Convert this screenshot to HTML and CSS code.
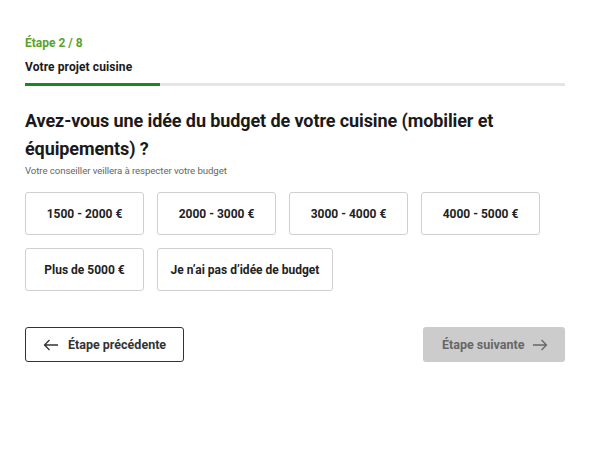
FILE: index.html
```html
<!DOCTYPE html>
<html lang="fr">
<head>
<meta charset="utf-8">
<link rel="stylesheet" href="styles.css">
</head>
<body>
<main class="page">
  <header class="step">
    <div class="step-count">Étape 2 / 8</div>
    <div class="step-title">Votre projet cuisine</div>
    <div class="progress"><div class="progress-fill"></div></div>
  </header>
  <section class="question">
    <h1 class="q-title">Avez-vous une idée du budget de votre cuisine (mobilier et équipements) ?</h1>
    <p class="q-sub">Votre conseiller veillera à respecter votre budget</p>
    <div class="options">
      <button class="opt">1500 - 2000 €</button>
      <button class="opt">2000 - 3000 €</button>
      <button class="opt">3000 - 4000 €</button>
      <button class="opt">4000 - 5000 €</button>
      <button class="opt">Plus de 5000 €</button>
      <button class="opt opt-wide">Je n’ai pas d’idée de budget</button>
    </div>
  </section>
  <nav class="nav">
    <button class="btn btn-prev">
      <svg width="16" height="12" viewBox="0 0 16 12"><path d="M15 6H1.5M6.5 1L1.5 6l5 5" fill="none" stroke="#333" stroke-width="1.3"/></svg>
      Étape précédente
    </button>
    <button class="btn btn-next">
      Étape suivante
      <svg width="16" height="12" viewBox="0 0 16 12"><path d="M1 6h13.5M9.5 1l5 5-5 5" fill="none" stroke="#666" stroke-width="1.3"/></svg>
    </button>
  </nav>
</main>
</body>
</html>
```

FILE: styles.css
```css
* { box-sizing: border-box; }
html, body { margin: 0; background: #fff; }
body { font-family: Roboto, "Liberation Sans", sans-serif; color: #1a1a1a; }
.page { padding: 35px 36px 0 25px; }
.step-count { color: #58a32a; font-weight: 700; font-size: 12px; line-height: 16px; }
.step-title { margin-top: 8px; font-weight: 700; font-size: 12px; line-height: 16px; color: #1a1a1a; letter-spacing: 0.1px; }
.progress { margin-top: 8px; height: 3px; background: #e5e5e5; }
.progress-fill { width: 135px; height: 3px; background: #188a1b; }
.question { margin-top: 21px; }
.q-title { margin: 0; font-size: 18px; line-height: 28px; font-weight: 700; max-width: 500px; letter-spacing: -0.1px; }
.q-sub { margin: 1px 0 0; font-size: 9.7px; line-height: 14px; color: #666; letter-spacing: -0.1px; }
.options { margin-top: 14px; display: flex; flex-wrap: wrap; gap: 13px; width: 530px; }
.opt { width: 119px; height: 43px; background: #fff; border: 1px solid #cfcfcf; border-radius: 3px; font-family: inherit; font-size: 12px; font-weight: 700; color: #222; padding: 0; }
.opt-wide { width: 176px; }
.nav { margin-top: 36px; display: flex; justify-content: space-between; }
.btn { height: 35px; border-radius: 3px; font-family: inherit; font-size: 12.5px; font-weight: 700; display: flex; align-items: center; gap: 8px; padding: 0; }
.btn-prev { width: 159px; background: #fff; border: 1.5px solid #333; color: #333; padding-left: 17px; gap: 9px; }
.btn-next { width: 142px; background: #cccccc; border: none; color: #666; padding-left: 19px; }
```
